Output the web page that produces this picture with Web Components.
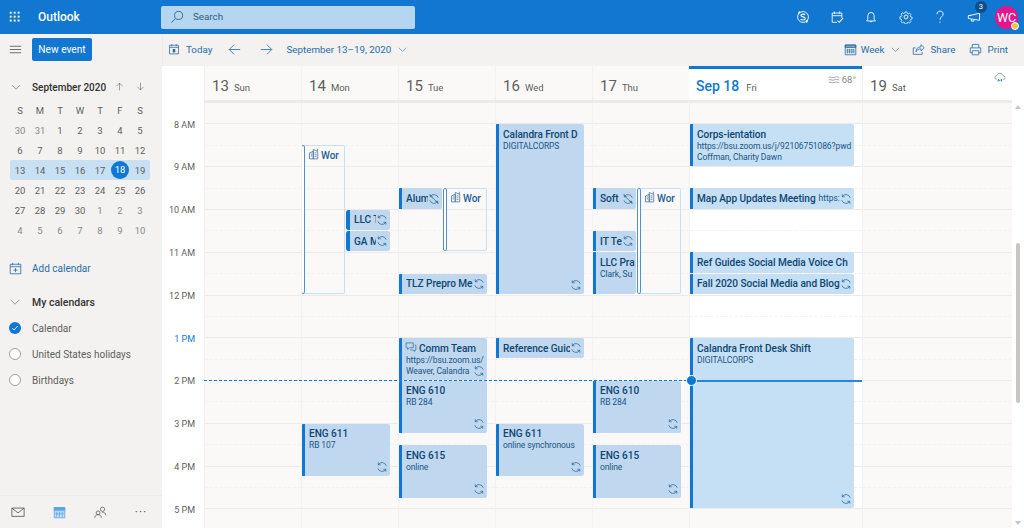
<!DOCTYPE html>
<html lang="en">
<head>
<meta charset="utf-8">
<title>Outlook Calendar</title>
<style>
  html, body { margin: 0; height: 100%; overflow: hidden; }
  body { font-family: Roboto, "Noto Sans", sans-serif; font-size: 10px; color: #323130; }
</style>
</head>
<body>
<outlook-app>
  <top-bar slot="top"></top-bar>
  <side-pane slot="side"></side-pane>
  <cal-toolbar slot="tools"></cal-toolbar>
  <week-view slot="main"></week-view>
</outlook-app>

<script>
const svg = (size, body, extra = '') =>
  `<svg width="${size}" height="${size}" viewBox="0 0 16 16" fill="none" stroke="currentColor" stroke-width="1" ${extra}>${body}</svg>`;

const ICONS = {
  waffle: [2, 6.5, 11].map(y => [2, 6.5, 11].map(x => `<rect x="${x}" y="${y}" width="2.2" height="2.2" fill="currentColor" stroke="none"/>`).join('')).join(''),
  search: '<circle cx="9.8" cy="6.2" r="4.6"/><path d="M6.4 9.6L1.6 14.4"/>',
  skype: '<circle cx="8" cy="8" r="6.2"/><path d="M3 4.5A2.4 2.4 0 0 1 4.8 2M13 11.5a2.4 2.4 0 0 1-1.8 2.5" stroke-width="1.6"/><path d="M10.6 5.6C9.8 4.4 5.6 4.2 5.6 6.1c0 2.2 5 1.4 5 3.8 0 2-4.4 1.8-5.3.4" stroke-width="1.3"/>',
  calCheck: '<path d="M8 14H2.5V3.5h11V9M2.5 6.5h11M5 1.6v3M11 1.6v3"/><path d="M8.5 12l2 2 4.5-5" stroke-width="1.2"/>',
  bell: '<path d="M3 12.5h10l-1.4-2V6.4a3.6 3.6 0 0 0-7.2 0v4.1zM6.5 12.5a1.6 1.6 0 0 0 3 0"/>',
  gear: '<circle cx="8" cy="8" r="2.2"/><path d="M6.8 1.6h2.4l.4 1.9 1.3.6 1.7-1 1.6 1.7-1 1.6.6 1.3 1.9.5v2.3l-1.9.5-.6 1.3 1 1.6-1.6 1.7-1.7-1-1.3.6-.4 1.9H6.8l-.4-1.9-1.3-.6-1.7 1-1.6-1.7 1-1.6-.6-1.3-1.9-.5V7.700l1.9-.5.6-1.300-1-1.600L3.400 2.600l1.700 1 1.300-.6z" transform="translate(.8 .8) scale(.9)"/>',
  help: '<path d="M4.500 4.800C4.500 2.800 6 1.300 8 1.300c2.100 0 3.600 1.400 3.600 3.300 0 3-3.600 3.200-3.600 6.400"/><circle cx="8" cy="13.800" r=".7" fill="currentColor" stroke="none"/>',
  megaphone: '<path d="M1.500 6.500v3.200l3 .5 9.800 1.600V3.800L4.500 6zM1.500 6.500l3-.5M5 10.300v2.400h3v-1.800"/>',
  hamburger: '<path d="M1 4h14M1 8h14M1 12h14" stroke-width="1.100"/>',
  today: '<path d="M2 3h12v11.500H2zM2 5.800h12M5 1.500v3M11 1.500v3"/><path d="M6.300 8h3.400v4.500H6.300z" fill="currentColor" stroke="none"/>',
  left: '<path d="M15 8H1.500M7.500 2L1.500 8l6 6"/>',
  right: '<path d="M1 8h13.500M8.500 2l6 6-6 6"/>',
  chevron: '<path d="M1.500 5l6.500 6.500L14.500 5"/>',
  up: '<path d="M8 15V2M2.500 7.500L8 2l5.500 5.500"/>',
  down: '<path d="M8 1v13M2.500 8.500L8 14l5.500-5.500"/>',
  weekGrid: '<path d="M1.500 2.500h13v12h-13z"/><path d="M1.500 2.500h13v3h-13z" fill="currentColor" fill-opacity=".55"/><path d="M4.200 7v6M6.800 7v6M9.400 7v6M12 7v6M3 8.500h10M3 11h10" stroke-width=".8"/>',
  share: '<path d="M11 2l4 3.800-4 3.800V7.300C7.500 7.300 5.500 8.800 5 11c0-4 2.200-6.300 6-6.300zM12.500 11v3H1.500V6h3"/>',
  print: '<path d="M4 6V1.800h8V6M4 12H1.500V6h13v6H12M4 9.500h8v5H4z"/>',
  addCal: '<path d="M1.500 2.800h13v11.700h-13zM1.500 5.800h13M4.500 1v3M11.500 1v3M8 7.500v5M5.500 10h5"/>',
  mail: '<path d="M1 3.500h14v9.500H1zM1 3.500l7 5.500 7-5.500"/>',
  calNav: '<path d="M1.500 2h13v12.500h-13z" fill="#bcdaf3"/><path d="M1.500 2h13v3.200h-13z" fill="currentColor"/><path d="M4.500 7v6M8 7v6M11.500 7v6M3 9.500h10" stroke-width=".9"/>',
  people: '<circle cx="10.500" cy="4" r="2.600"/><circle cx="5" cy="8.400" r="2.300"/><path d="M1 14.500c0-2.500 1.600-3.800 4-3.800s4 1.300 4 3.800M10 7.600c2.700 0 4.600 1.400 4.600 4"/>',
  sync: '<path d="M13.600 6.300A5.900 5.900 0 0 0 3 4.800M2.400 9.700a5.900 5.900 0 0 0 10.600 1.500"/><path d="M3 1.800v3.200h3.200M13 14.200V11H9.800"/>',
  syncOff: '<path d="M13.600 6.300A5.900 5.900 0 0 0 3 4.800M2.400 9.700a5.900 5.900 0 0 0 10.600 1.500M2 2.500l12 11.500"/><path d="M3 1.800v3.200h3.200M13 14.200V11H9.800"/>',
  building: '<path d="M2 6.500l5-2v10H2zM7 2l6 2.500v10H7zM3.500 8h2M3.500 10.500h2M8.800 6.500h2.500M8.800 9h2.500M8.800 11.500h2.500M12.500 1v3"/>',
  chat: '<path d="M1.500 2.500h9.500v6.500H6L3.500 11.200V9h-2zM13 5.500h1.500v6.500h-1.500v2l-2.500-2H7"/>',
  wind: '<path d="M1 4.500c2.500-1.500 3.500 1 7 0s3.500-1 7 0M1 8c2.500-1.500 3.500 1 7 0s3.500-1 7 0M1 11.500c2.500-1.500 3.500 1 7 0s3.500-1 7 0"/>',
  cloud: '<path d="M4 11.500H3.500A2.800 2.800 0 0 1 3.700 6 4.300 4.300 0 0 1 12 6.200a2.700 2.700 0 0 1 .8 5.300H12"/><path d="M6.200 11l-1 3M10.500 10.500l-1 3.500M8 11.500l-.6 2" stroke="#0f78d4" stroke-width="1.300"/>'
};

class OutlookApp extends HTMLElement {
  connectedCallback() {
    this.attachShadow({mode: 'open'});
    this.shadowRoot.innerHTML = `
      <style>
        :host { display: grid; grid-template-columns: 162px 862px; grid-template-rows: 34px 32px 462px; height: 528px; overflow: hidden; background: #f3f2f1; }
        ::slotted([slot=top]) { grid-column: 1 / 3; }
        ::slotted([slot=side]) { grid-row: 2 / 4; }
      </style>
      <slot name="top"></slot>
      <slot name="side"></slot>
      <slot name="tools"></slot>
      <slot name="main"></slot>`;
  }
}

class TopBar extends HTMLElement {
  connectedCallback() {
    this.attachShadow({mode: 'open'});
    const actions = ['skype', 'calCheck', 'bell', 'gear', 'help'];
    this.shadowRoot.innerHTML = `
      <style>
        :host { display: flex; align-items: center; height: 34px; background: #1277d1; color: #fff; }
        .waffle { display: flex; margin-left: 8px; width: 16px; }
        .brand { margin-left: 14px; width: 123px; font-size: 12px; font-weight: 500; }
        .search { display: flex; align-items: center; width: 254px; height: 23px; background: #b5d5f0; border-radius: 2px; color: #2c5f88; font-size: 9.800px; }
        .search svg { margin: 0 9px 0 9px; }
        .search span { padding-bottom: 1px; }
        .actions { margin-left: auto; display: flex; align-items: center; padding-right: 6px; }
        .actions > span { display: flex; justify-content: center; width: 34.200px; position: relative; }
        .badge { position: absolute; top: -9px; left: 18px; width: 12px; height: 12px; border-radius: 50%; background: #0f4f85; font-size: 7.500px; font-weight: 400; line-height: 12px; text-align: center; }
        .avatar { position: relative; width: 23px; height: 23px; margin-left: 4px; border-radius: 50%; background: #e3168f; font-size: 12.500px; line-height: 23px; text-align: center; }
        .presence { position: absolute; right: -1px; bottom: -1px; width: 6px; height: 6px; border-radius: 50%; background: #f5c242; border: 1.500px solid #fff; }
      </style>
      <span class="waffle">${svg(14, ICONS.waffle)}</span>
      <span class="brand">Outlook</span>
      <div class="search">${svg(14, ICONS.search)}<span>Search</span></div>
      <div class="actions">
        ${actions.map(name => `<span>${svg(14, ICONS[name])}</span>`).join('')}
        <span>${svg(14, ICONS.megaphone)}<b class="badge">3</b></span>
        <div class="avatar">WC<i class="presence"></i></div>
      </div>`;
  }
}

class CalToolbar extends HTMLElement {
  connectedCallback() {
    this.attachShadow({mode: 'open'});
    this.shadowRoot.innerHTML = `
      <style>
        :host { display: flex; align-items: center; height: 32px; padding-bottom: 2px; background: #f3f2f1; color: #2a6ca6; font-size: 9.800px; border-left: 1px solid #edebe9; box-sizing: border-box; }
        span { display: inline-flex; align-items: center; white-space: nowrap; }
        .today { margin-left: 5px; gap: 6px; width: 48px; }
        .prev { margin-left: 11.500px; }
        .next { margin-left: 19px; }
        .range { margin-left: 14px; width: 104px; }
        .chev { margin-left: 7px; }
        .end { margin-left: auto; padding-right: 16px; }
        .end .chev { margin-left: 6px; }
        .week { gap: 4px; }
        .share { margin-left: 12.500px; gap: 5.500px; }
        .print { margin-left: 13.500px; gap: 5.500px; }
      </style>
      <span class="today">${svg(12, ICONS.today)}Today</span>
      <span class="prev">${svg(13, ICONS.left)}</span>
      <span class="next">${svg(13, ICONS.right)}</span>
      <span class="range">September 13–19, 2020</span>
      <span class="chev">${svg(9, ICONS.chevron)}</span>
      <span class="end">
        <span class="week">${svg(13, ICONS.weekGrid)}Week</span>
        <span class="chev">${svg(9, ICONS.chevron)}</span>
        <span class="share">${svg(13, ICONS.share)}Share</span>
        <span class="print">${svg(13, ICONS.print)}Print</span>
      </span>`;
  }
}

class MiniCal extends HTMLElement {
  connectedCallback() {
    this.attachShadow({mode: 'open'});
    const cells = [
      [30, 31, 1, 2, 3, 4, 5], [6, 7, 8, 9, 10, 11, 12], [13, 14, 15, 16, 17, 18, 19],
      [20, 21, 22, 23, 24, 25, 26], [27, 28, 29, 30, 1, 2, 3], [4, 5, 6, 7, 8, 9, 10]
    ];
    const isOut = (r, d) => (r === 0 && d > 20) || (r >= 4 && d < 15);
    this.shadowRoot.innerHTML = `
      <style>
        :host { display: block; padding: 11px 10px 0; }
        header { display: flex; align-items: center; height: 20px; color: #605e5c; }
        header b { flex: 1; margin-left: 11px; color: #323130; font-weight: 500; font-size: 10px; white-space: nowrap; }
        header svg:first-child { margin-left: 1px; }
        header .up { margin-right: 11px; }
        header .dn { margin-right: 7px; }
        .grid { display: grid; grid-template-columns: repeat(7, 20px); grid-auto-rows: 20px; margin-top: 3px; font-size: 9.500px; color: #605e5c; }
        .grid > span { display: flex; align-items: center; justify-content: center; }
        .out { color: #8a8886; }
        .sel { background: #c7e0f4; }
        .first { border-radius: 2px 0 0 2px; }
        .last { border-radius: 0 2px 2px 0; }
        .today i { width: 18px; height: 18px; border-radius: 50%; background: #0f78d4; color: #fff; font-style: normal; text-align: center; line-height: 18px; }
      </style>
      <header>
        ${svg(10, ICONS.chevron)}<b>September 2020</b>
        <span class="up">${svg(9, ICONS.up)}</span><span class="dn">${svg(9, ICONS.down)}</span>
      </header>
      <div class="grid">
        ${['S', 'M', 'T', 'W', 'T', 'F', 'S'].map(d => `<span>${d}</span>`).join('')}
        ${cells.map((row, r) => row.map((d, i) => {
          const cls = [isOut(r, d) ? 'out' : '', r === 2 ? 'sel' : '', r === 2 && i === 0 ? 'first' : '', r === 2 && i === 6 ? 'last' : '', d === 18 ? 'today' : ''].join(' ');
          return `<span class="${cls}">${d === 18 ? '<i>18</i>' : d}</span>`;
        }).join('')).join('')}
      </div>`;
  }
}

class CalendarList extends HTMLElement {
  connectedCallback() {
    this.attachShadow({mode: 'open'});
    const rows = [['Calendar', true], ['United States holidays', false], ['Birthdays', false]];
    this.shadowRoot.innerHTML = `
      <style>
        :host { display: block; padding: 18px 0 0 9px; font-size: 10px; }
        div { display: flex; align-items: center; white-space: nowrap; }
        .slot { width: 23px; display: flex; justify-content: flex-start; }
        .add { height: 20px; color: #2a6ca6; }
        .head { height: 20px; margin-top: 14px; font-weight: 500; font-size: 10.500px; margin-bottom: 3px; color: #323130; }
        .head svg { color: #605e5c; margin-left: 1px; }
        .row { height: 26px; color: #605e5c; }
        .circle { box-sizing: border-box; width: 12px; height: 12px; border-radius: 50%; border: 1px solid #a19f9d; background: #fff; }
        .on { display: flex; align-items: center; justify-content: center; border: 0; background: #0f78d4; color: #fff; }
      </style>
      <div class="add"><span class="slot">${svg(13, ICONS.addCal)}</span>Add calendar</div>
      <div class="head"><span class="slot">${svg(10, ICONS.chevron)}</span>My calendars</div>
      ${rows.map(([label, on]) => `
        <div class="row">
          <span class="slot"><span class="circle ${on ? 'on' : ''}">${on ? svg(8, '<path d="M2.500 8.500l3.500 3.500 7.500-8" stroke-width="1.800"/>') : ''}</span></span>
          ${label}
        </div>`).join('')}`;
  }
}

class SidePane extends HTMLElement {
  connectedCallback() {
    this.attachShadow({mode: 'open'});
    this.shadowRoot.innerHTML = `
      <style>
        :host { display: flex; flex-direction: column; height: 494px; background: #f3f2f1; }
        .new { display: flex; align-items: center; box-sizing: border-box; height: 32px; padding: 0 0 1px 9px; color: #605e5c; }
        .btn { display: flex; align-items: center; justify-content: center; box-sizing: border-box; width: 60px; height: 23px; padding-bottom: 1px; margin-left: 10px; background: #1277d1; color: #fff; border-radius: 2px; font-size: 10.200px; }
        .grow { flex: 1; }
        nav { display: flex; align-items: center; height: 32px; border-top: 1px solid #edebe9; color: #605e5c; }
        nav span { width: 41px; display: flex; justify-content: center; }
        nav span:first-child { margin-left: -2.500px; }
        nav .cal { color: #5aa5e5; }
        nav span.dots { font-size: 12px; letter-spacing: 1px; }
      </style>
      <div class="new">${svg(13, ICONS.hamburger)}<div class="btn">New event</div></div>
      <mini-cal></mini-cal>
      <calendar-list></calendar-list>
      <div class="grow"></div>
      <nav>
        <span>${svg(14, ICONS.mail)}</span>
        <span class="cal">${svg(13, ICONS.calNav)}</span>
        <span>${svg(13, ICONS.people)}</span>
        <span class="dots">···</span>
      </nav>`;
  }
}

class DayHead extends HTMLElement {
  connectedCallback() {
    this.attachShadow({mode: 'open'});
    const weather = this.getAttribute('weather');
    this.shadowRoot.innerHTML = `
      <style>
        :host { display: flex; position: relative; align-items: baseline; gap: 5px; box-sizing: border-box; height: 34px; padding: 10px 0 0 7px; background: #faf9f8; border-left: 1px solid #f3f2f1; color: #605e5c; }
        :host([white]) { background: #fff; }
        :host([current]) { border-top: 3px solid #0f78d4; padding: 7px 0 0 7px; border-left: 0; gap: 7px; }
        .num { font-size: 15px; line-height: 20px; }
        :host([current]) .num { color: #0f78d4; font-weight: 500; font-size: 14px; }
        .name { font-size: 9.500px; }
        .weather { position: absolute; top: 5px; right: 6px; display: flex; align-items: center; gap: 2px; font-size: 9.500px; line-height: 12px; color: #8a8886; }
      </style>
      <span class="num">${this.getAttribute('num')}</span>
      <span class="name">${this.getAttribute('name')}</span>
      ${weather ? `<span class="weather">${svg(12, ICONS[weather])}${this.getAttribute('temp') || ''}</span>` : ''}`;
  }
}

class CalEvent extends HTMLElement {
  connectedCallback() {
    this.attachShadow({mode: 'open'});
    const start = parseFloat(this.getAttribute('start'));
    const end = parseFloat(this.getAttribute('end'));
    const icon = this.getAttribute('icon');
    const lead = this.getAttribute('lead');
    const inline = this.getAttribute('inline');
    // hours map to the column: 8 AM is 21px from the top, 42.8px per hour
    this.style.top = 21 + (start - 8) * 42.8 + 'px';
    this.style.height = (end - start) * 42.8 - 1 + 'px';
    this.style.left = this.getAttribute('x') - 1 + 'px';
    this.style.width = this.getAttribute('w') + 'px';
    this.shadowRoot.innerHTML = `
      <style>
        :host { position: absolute; display: block; box-sizing: border-box; overflow: hidden; padding: 3.500px 1px 0 8px; border-radius: 2px; background: #bfd8ef; color: #1d5583; font-size: 8.500px; line-height: 11.500px; }
        :host::before { content: ""; position: absolute; left: 0; top: 0; bottom: 0; width: 4px; background: #1277d1; border-radius: 2px 0 0 2px; }
        :host([now]) { background: #c5dff4; }
        :host([kind=work]) { background: transparent; box-shadow: inset 0 0 0 1px #c7e0f4; padding: 3.500px 0 0 20px; color: #1d5f99; }
        :host([kind=work])::before { width: 2px; background: #fff; border: 1px solid #4d92d0; border-radius: 2px; }
        .title { display: flex; gap: 3px; height: 13px; line-height: 13px; white-space: nowrap; overflow: hidden; font-size: 10.100px; font-weight: 500; letter-spacing: -.05px; color: #0f4672; }
        :host([kind=work]) .title { color: #1d5f99; }
        .clip { display: flex; gap: 3px; overflow: hidden; flex: 1; min-width: 0; }
        .inline { font-weight: 400; font-size: 8.500px; color: #1d5583; }
        .sub { white-space: nowrap; overflow: hidden; letter-spacing: -.1px; }
        .corner { position: absolute; right: 2px; bottom: 3px; color: #2a6797; display: flex; background: inherit; }
        .corner.single { bottom: 4px; }
        .lead { position: absolute; left: 7px; top: 3px; color: #3a6f9e; display: flex; }
        .lead-pad { width: 10px; flex: none; }
      </style>
      ${lead ? `<span class="lead">${svg(12, ICONS[lead])}</span>` : ''}
      <div class="title">${lead === 'chat' ? '<span class="lead-pad"></span>' : ''}<span class="clip"><span>${this.getAttribute('title')}</span>${inline ? `<span class="inline">${inline}</span>` : ''}</span></div>
      ${['sub', 'sub2'].map(k => this.getAttribute(k) ? `<div class="sub">${this.getAttribute(k)}</div>` : '').join('')}
      ${icon ? `<span class="corner ${end - start <= 0.5 ? 'single' : ''}">${svg(12, ICONS[icon])}</span>` : ''}`;
  }
}

class DayColumn extends HTMLElement {
  connectedCallback() {
    this.attachShadow({mode: 'open'});
    // half-hour rows from 7:30 AM; index 0 ends on the 8 AM line
    const slots = Array.from({length: 21}, (_, i) => {
      const work = this.hasAttribute('white') && i >= 1 && i <= 18;
      return `<div class="s ${i % 2 ? 'half' : ''} ${work ? 'work' : ''}"></div>`;
    }).join('');
    this.shadowRoot.innerHTML = `
      <style>
        :host { display: block; position: relative; height: 425px; overflow: hidden; background: #faf9f8; border-left: 1px solid #f3f2f1; box-sizing: border-box; }
        .s { box-sizing: border-box; height: 21.400px; border-bottom: 1px solid #edebe9; }
        .half { border-bottom: 1px dashed #f3f2f1; }
        .work { background: #fff; }
      </style>
      ${slots}
      <slot></slot>`;
  }
}

class NowLine extends HTMLElement {
  connectedCallback() {
    this.attachShadow({mode: 'open'});
    this.shadowRoot.innerHTML = `
      <style>
        :host { position: absolute; left: 42px; right: 162px; top: 314px; height: 1px; display: block; border-top: 1px dashed #0f78d4; }
        .solid { position: absolute; left: 488px; width: 170px; top: -1px; height: 2px; background: #2a85d6; }
        .dot { position: absolute; left: 482px; top: -6px; width: 9px; height: 9px; box-sizing: content-box; border-radius: 50%; background: #0f78d4; border: 1px solid #fff; }
      </style>
      <div class="solid"></div><div class="dot"></div>`;
  }
}

class ScrollRail extends HTMLElement {
  connectedCallback() {
    this.attachShadow({mode: 'open'});
    this.shadowRoot.innerHTML = `
      <style>
        :host { display: flex; flex-direction: column; align-items: center; height: 462px; box-sizing: border-box; padding: 39px 0 3px; background: #fff; }
        .u, .d { width: 0; height: 0; border-left: 3px solid transparent; border-right: 3px solid transparent; }
        .u { border-bottom: 4px solid #c8c6c4; }
        .d { border-top: 4px solid #c8c6c4; margin-top: auto; }
        .thumb { width: 4px; height: 160px; margin-top: 134px; background: #c8c6c4; border-radius: 2px; }
      </style>
      <div class="u"></div><div class="thumb"></div><div class="d"></div>`;
  }
}

class WeekView extends HTMLElement {
  connectedCallback() {
    this.attachShadow({mode: 'open'});
    const heads = [
      ['13', 'Sun'], ['14', 'Mon'], ['15', 'Tue'], ['16', 'Wed'], ['17', 'Thu']
    ].map(([num, name]) => `<day-head num="${num}" name="${name}"></day-head>`).join('');
    const syncIcon = 'icon="sync"';
    const days = [
      `<cal-event kind="work" lead="building" title="Wor" start="8.5" end="12" x="0" w="44"></cal-event>
       <cal-event title="LLC T" ${syncIcon} start="10" end="10.5" x="45" w="44"></cal-event>
       <cal-event title="GA M" ${syncIcon} start="10.5" end="11" x="45" w="44"></cal-event>
       <cal-event title="ENG 611" sub="RB 107" ${syncIcon} start="15" end="16.25" x="0" w="89"></cal-event>`,
      `<cal-event title="Alum" icon="syncOff" start="9.5" end="10" x="0" w="44"></cal-event>
       <cal-event kind="work" lead="building" title="Wor" start="9.5" end="11" x="45" w="44"></cal-event>
       <cal-event title="TLZ Prepro Me" ${syncIcon} start="11.5" end="12" x="0" w="89"></cal-event>
       <cal-event lead="chat" title="Comm Team" sub="https://bsu.zoom.us/" sub2="Weaver, Calandra" ${syncIcon} start="13" end="14" x="0" w="89"></cal-event>
       <cal-event title="ENG 610" sub="RB 284" ${syncIcon} start="14" end="15.25" x="0" w="89"></cal-event>
       <cal-event title="ENG 615" sub="online" ${syncIcon} start="15.5" end="16.75" x="0" w="89"></cal-event>`,
      `<cal-event title="Calandra Front D" sub="DIGITALCORPS" ${syncIcon} start="8" end="12" x="0" w="89"></cal-event>
       <cal-event title="Reference Guic" ${syncIcon} start="13" end="13.5" x="0" w="89"></cal-event>
       <cal-event title="ENG 611" sub="online synchronous" ${syncIcon} start="15" end="16.25" x="0" w="89"></cal-event>`,
      `<cal-event title="Soft" icon="syncOff" start="9.5" end="10" x="0" w="44"></cal-event>
       <cal-event kind="work" lead="building" title="Wor" start="9.5" end="12" x="45" w="44"></cal-event>
       <cal-event title="IT Te" ${syncIcon} start="10.5" end="11" x="0" w="44"></cal-event>
       <cal-event title="LLC Pra" sub="Clark, Su" start="11" end="12" x="0" w="44"></cal-event>
       <cal-event title="ENG 610" sub="RB 284" ${syncIcon} start="14" end="15.25" x="0" w="89"></cal-event>
       <cal-event title="ENG 615" sub="online" ${syncIcon} start="15.5" end="16.75" x="0" w="89"></cal-event>`
    ];
    this.shadowRoot.innerHTML = `
      <style>
        :host { display: grid; position: relative; height: 462px; overflow: hidden; background: #fff; grid-template-columns: 42px repeat(5, 97px) 173px 150px 12px; grid-template-rows: 34px 3px 425px; }
        .corner { grid-row: 1 / 4; grid-column: 1; display: flex; flex-direction: column; }
        .label { position: absolute; left: 0; width: 33px; text-align: right; font-size: 9px; line-height: 12px; color: #605e5c; white-space: nowrap; }
        .label.now { color: #0f78d4; }
        .band { grid-row: 2; grid-column: 2 / 9; background: #edebe9; }
        .rail { grid-row: 1 / 4; grid-column: 9; }
        .times { position: relative; height: 462px; }
      </style>
      <div class="corner"><div class="times">
        ${['8 AM', '9 AM', '10 AM', '11 AM', '12 PM', '1 PM', '2 PM', '3 PM', '4 PM', '5 PM'].map((t, i) =>
          `<span class="label ${t === '1 PM' ? 'now' : ''}" style="top:${52.5 + i * 42.8}px">${t}</span>`).join('')}
      </div></div>
      ${heads}
      <day-head current white num="Sep 18" name="Fri" weather="wind" temp="68°"></day-head>
      <day-head white num="19" name="Sat" weather="cloud"></day-head>
      <scroll-rail class="rail"></scroll-rail>
      <div class="band"></div>
      <day-column></day-column>
      ${days.map(d => `<day-column>${d}</day-column>`).join('')}
      <day-column white>
        <cal-event now title="Corps-ientation" sub="https://bsu.zoom.us/j/92106751086?pwd" sub2="Coffman, Charity Dawn" start="8" end="9" x="0" w="165"></cal-event>
        <cal-event now title="Map App Updates Meeting" inline="https:" ${syncIcon} start="9.5" end="10" x="0" w="165"></cal-event>
        <cal-event now title="Ref Guides Social Media Voice Ch" start="11" end="11.5" x="0" w="165"></cal-event>
        <cal-event now title="Fall 2020 Social Media and Blog" ${syncIcon} start="11.5" end="12" x="0" w="165"></cal-event>
        <cal-event now title="Calandra Front Desk Shift" sub="DIGITALCORPS" ${syncIcon} start="13" end="17" x="0" w="165"></cal-event>
      </day-column>
      <day-column></day-column>
      <now-line></now-line>`;
  }
}

const register = () => {
  customElements.define('day-head', DayHead);
  customElements.define('cal-event', CalEvent);
  customElements.define('day-column', DayColumn);
  customElements.define('now-line', NowLine);
  customElements.define('scroll-rail', ScrollRail);
  customElements.define('week-view', WeekView);
  customElements.define('mini-cal', MiniCal);
  customElements.define('calendar-list', CalendarList);
  customElements.define('side-pane', SidePane);
  customElements.define('cal-toolbar', CalToolbar);
  customElements.define('top-bar', TopBar);
  customElements.define('outlook-app', OutlookApp);
};
register();
</script>
</body>
</html>
